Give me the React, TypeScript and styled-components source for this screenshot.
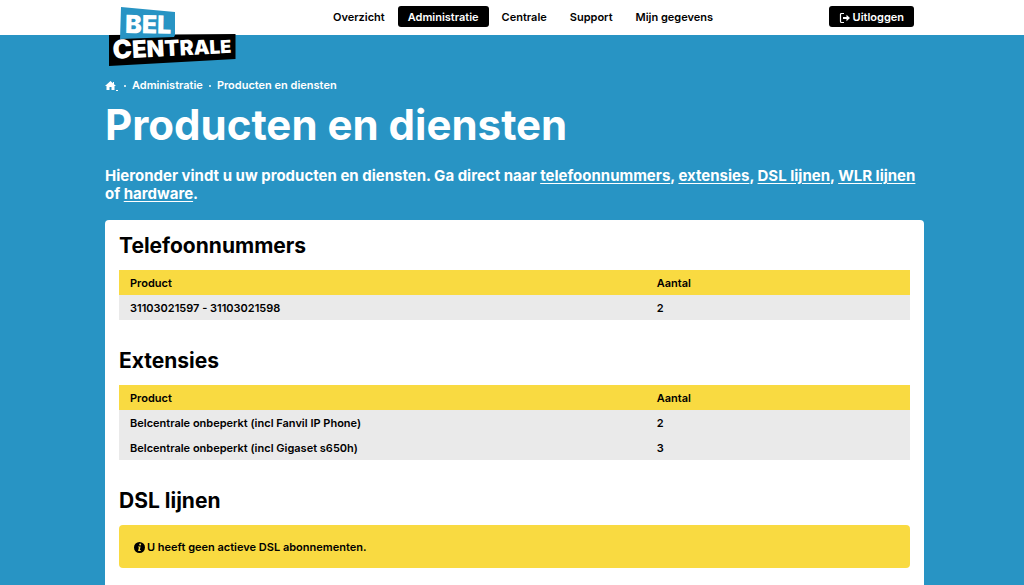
import React from "react";
import styled, { createGlobalStyle } from "styled-components";

const blue = "#2894c4";
const yellow = "#f9da41";

const GlobalStyle = createGlobalStyle`
  *, *::before, *::after { box-sizing: border-box; }
  body {
    margin: 0;
    background: ${blue};
    color: #000;
    font-family: Inter, "Open Sans", sans-serif;
    font-size: 11px;
    font-weight: 600;
    line-height: 15px;
  }
`;

const Page = styled.div`
  display: flex;
  flex-direction: column;
  min-height: 100vh;
`;

const Header = styled.header`
  height: 35px;
  padding-left: 5px;
  background: #fff;
`;

const HeaderInner = styled.div`
  display: flex;
  align-items: flex-start;
  max-width: 819px;
  margin: 0 auto;
  padding: 6px 10px 0 4px;
`;

const LogoLink = styled.a`
  width: 127px;
  height: 29px;
  margin-right: 87px;
  svg { display: block; overflow: visible; }
`;

const Nav = styled.nav`
  display: flex;
  gap: 3px;
`;

const NavLink = styled.a<{ $active?: boolean }>`
  padding: 4px 10px 2px;
  border-radius: 3px;
  background: ${(p) => (p.$active ? "#000" : "transparent")};
  color: ${(p) => (p.$active ? "#fff" : "#000")};
  text-decoration: none;
`;

const LogoutButton = styled.button`
  display: flex;
  align-items: center;
  gap: 2px;
  margin-left: auto;
  padding: 4px 10px 2px;
  border: 0;
  border-radius: 3px;
  background: #000;
  color: #fff;
  font: inherit;
  cursor: pointer;
`;

const Main = styled.main`
  display: flex;
  flex: 1;
  flex-direction: column;
  padding-left: 5px;
`;

const Container = styled.div`
  display: flex;
  flex: 1;
  flex-direction: column;
  width: 100%;
  max-width: 819px;
  margin: 0 auto;
`;

const Breadcrumbs = styled.ol`
  display: flex;
  align-items: center;
  margin: 43px 0 0;
  padding: 0;
  list-style: none;
  color: #fff;
  li { display: flex; align-items: center; }
  li + li::before {
    content: "";
    width: 2px;
    height: 2px;
    margin: 0 6px;
    border-radius: 1px;
    background: #fff;
  }
  a { color: inherit; text-decoration: none; }
  svg { display: block; }
`;

const Title = styled.h1`
  margin: 7px 0 0;
  color: #fff;
  font-size: 42px;
  font-weight: 700;
  line-height: 50px;
`;

const Intro = styled.p`
  margin: 17px 0 0;
  color: #fff;
  font-size: 15px;
  font-weight: 700;
  line-height: 18px;
  a { color: inherit; text-underline-offset: 2px; }
`;

const Card = styled.div`
  display: flex;
  flex: 1;
  flex-direction: column;
  gap: 27px;
  margin-top: 17px;
  padding: 12px 14px 17px;
  border-radius: 4px 4px 0 0;
  background: #fff;
`;

const SectionTitle = styled.h2`
  margin: 0 0 10px;
  font-size: 21px;
  font-weight: 700;
  line-height: 28px;
`;

const Table = styled.table`
  width: 100%;
  border-collapse: collapse;
  table-layout: fixed;
  th, td { padding: 6px 11px 4px; text-align: left; }
  th { font-weight: 600; }
  th:first-child { width: 66.6%; }
  thead { background: ${yellow}; }
  tbody { background: #eaeaea; }
`;

const Notice = styled.p`
  display: flex;
  align-items: center;
  gap: 2px;
  margin: 0;
  padding: 15px 15px 13px;
  border-radius: 4px;
  background: ${yellow};
`;

const Logo = () => (
  <svg width="127" height="60" viewBox="0 0 127 60" role="img" aria-label="Bel Centrale">
    <path d="M0 29 126.500 28V53L0 60Z" fill="#000" />
    <path d="M12 1 66 6V29L65 31 11 33Z" fill={blue} />
    <g fill="#fff" fontFamily="Inter, sans-serif" fontWeight="900">
      <text x="16" y="27" fontSize="25" transform="rotate(1 16 27)">BEL</text>
      <text x="4" y="53" transform="rotate(-3 4 53)">
        <tspan fontSize="26">C</tspan>
        <tspan fontSize="24">E</tspan>
        <tspan fontSize="23">N</tspan>
        <tspan fontSize="22">T</tspan>
        <tspan fontSize="21">R</tspan>
        <tspan fontSize="20">A</tspan>
        <tspan fontSize="19">L</tspan>
        <tspan fontSize="18">E</tspan>
      </text>
    </g>
  </svg>
);

const HomeIcon = () => (
  <svg width="13" height="11" viewBox="0 0 13 11" aria-hidden="true">
    <path d="M5.500 1 0 6h1.500v4h3V7h2v3h3V6H11L9 4.200V2H8v1.200Z" fill="#fff" />
    <path d="M11 10h2v1h-2Z" fill="#fff" />
  </svg>
);

const LogoutIcon = () => (
  <svg width="12" height="12" viewBox="0 0 12 12" aria-hidden="true">
    <path d="M5 1.500H2.500Q1.500 1.500 1.500 2.500V9.500Q1.500 10.500 2.500 10.500H5" fill="none" stroke="#fff" strokeWidth="1.200" />
    <path d="M4 5h3.500V2.800L11 6 7.500 9.200V7H4Z" fill="#fff" />
  </svg>
);

const InfoIcon = () => (
  <svg width="11" height="11" viewBox="0 0 10 10" aria-hidden="true">
    <circle cx="5" cy="5" r="5" fill="#000" />
    <circle cx="5.600" cy="2.300" r="0.900" fill={yellow} />
    <path d="M3.800 4h2.200L5.300 7.300H6.100V8.100H3.700L4.500 4.800H3.600Z" fill={yellow} />
  </svg>
);

const navItems = ["Overzicht", "Administratie", "Centrale", "Support", "Mijn gegevens"];

const ProductTable = ({ rows }: { rows: [string, number][] }) => (
  <Table>
    <thead>
      <tr>
        <th scope="col">Product</th>
        <th scope="col">Aantal</th>
      </tr>
    </thead>
    <tbody>
      {rows.map(([name, count]) => (
        <tr key={name}>
          <td>{name}</td>
          <td>{count}</td>
        </tr>
      ))}
    </tbody>
  </Table>
);

export default function App() {
  return (
    <Page>
      <GlobalStyle />
      <Header>
        <HeaderInner>
          <LogoLink href="#"><Logo /></LogoLink>
          <Nav>
            {navItems.map((item) => (
              <NavLink key={item} href="#" $active={item === "Administratie"}>{item}</NavLink>
            ))}
          </Nav>
          <LogoutButton type="button"><LogoutIcon />Uitloggen</LogoutButton>
        </HeaderInner>
      </Header>
      <Main>
        <Container>
          <Breadcrumbs>
            <li><a href="#" aria-label="Home"><HomeIcon /></a></li>
            <li><a href="#">Administratie</a></li>
            <li>Producten en diensten</li>
          </Breadcrumbs>
          <Title>Producten en diensten</Title>
          <Intro>
            Hieronder vindt u uw producten en diensten. Ga direct naar{" "}
            <a href="#telefoonnummers">telefoonnummers</a>, <a href="#extensies">extensies</a>,{" "}
            <a href="#dsl">DSL lijnen</a>, <a href="#wlr">WLR lijnen</a> of <a href="#hardware">hardware</a>.
          </Intro>
          <Card>
            <section id="telefoonnummers">
              <SectionTitle>Telefoonnummers</SectionTitle>
              <ProductTable rows={[["31103021597 - 31103021598", 2]]} />
            </section>
            <section id="extensies">
              <SectionTitle>Extensies</SectionTitle>
              <ProductTable
                rows={[
                  ["Belcentrale onbeperkt (incl Fanvil IP Phone)", 2],
                  ["Belcentrale onbeperkt (incl Gigaset s650h)", 3],
                ]}
              />
            </section>
            <section id="dsl">
              <SectionTitle>DSL lijnen</SectionTitle>
              <Notice><InfoIcon />U heeft geen actieve DSL abonnementen.</Notice>
            </section>
          </Card>
        </Container>
      </Main>
    </Page>
  );
}
